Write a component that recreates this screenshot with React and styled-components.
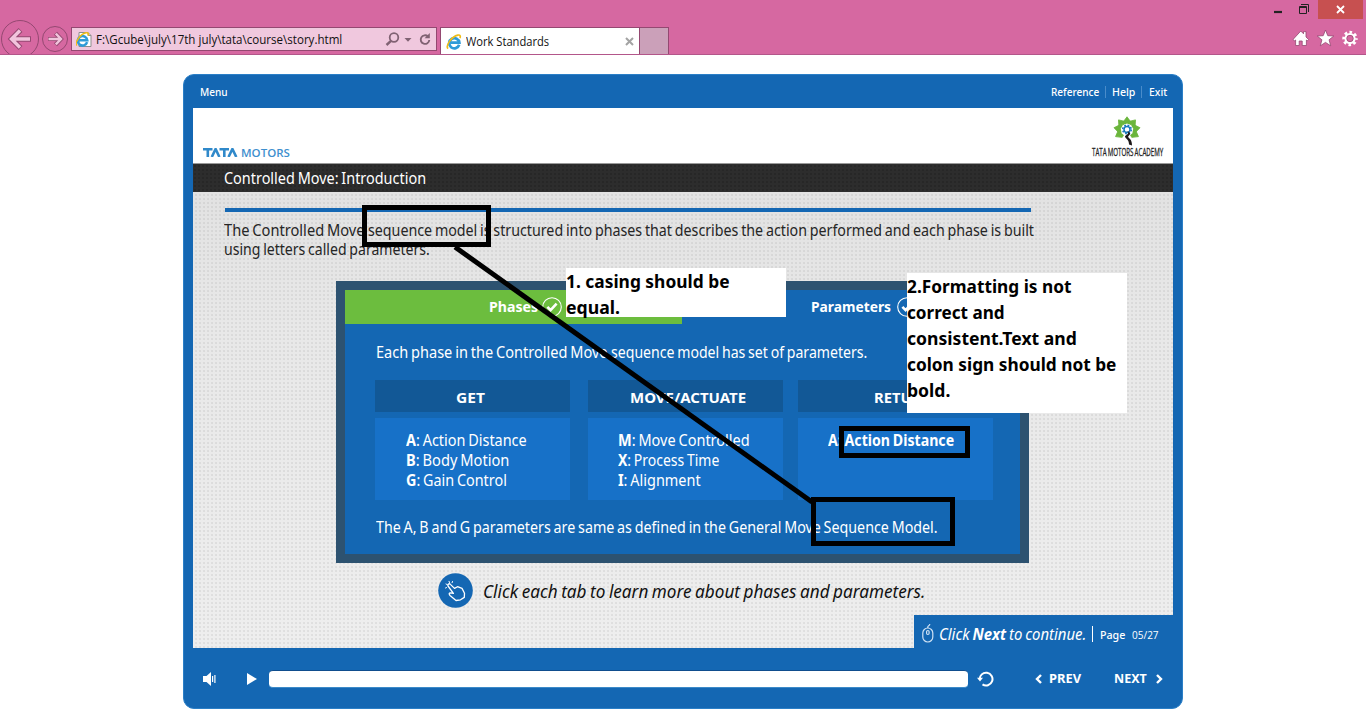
import React, { useLayoutEffect, useRef, useState } from 'react';
import styled, { createGlobalStyle } from 'styled-components';

const Global = createGlobalStyle`
  * { box-sizing: border-box; }
  html, body { margin: 0; padding: 0; background: #fff; overflow: hidden; }
  body { font-family: 'Noto Sans', 'Open Sans', sans-serif; }
`;

/* Single line of text condensed to a fixed measure */
const Measure = styled.span`
  display: block;
  flex: none;
  width: ${(p) => p.$w}px;
  white-space: pre;
  text-align: left;
`;
const Glyphs = styled.span`
  display: inline-block;
  transform-origin: 0 50%;
`;
function Fit({ w, children, className }) {
  const ref = useRef(null);
  const [scale, setScale] = useState(1);
  useLayoutEffect(() => {
    if (ref.current) setScale(w / ref.current.offsetWidth);
  }, [w, children]);
  return (
    <Measure $w={w} className={className}>
      <Glyphs ref={ref} style={{ transform: `scaleX(${scale})` }}>{children}</Glyphs>
    </Measure>
  );
}

const Screen = styled.div`
  position: relative;
  width: 1366px;
  height: 728px;
  background: #fff;
  overflow: hidden;
`;

/* ---------- browser chrome ---------- */
const Chrome = styled.header`
  display: flex;
  align-items: flex-start;
  height: 55px;
  background: #d668a1;
  border-bottom: 1px solid #b3568a;
  overflow: hidden;
`;
const NavArrows = styled.svg`
  flex: none;
  width: 71px;
  height: 54px;
`;
const Address = styled.div`
  display: flex;
  align-items: center;
  width: 366px;
  height: 24px;
  margin-top: 27px;
  padding: 0 4px;
  border: 1px solid #944871;
  background: #f0c8de;
  font: 12.5px/22px 'Open Sans', sans-serif;
  color: #111;
`;
const AddressText = styled(Fit)`
  margin: 1px 0 0 3px;
`;
const AddressTools = styled.svg`
  width: 50px;
  height: 20px;
  margin-left: auto;
`;
const Tab = styled.div`
  display: flex;
  align-items: center;
  width: 200px;
  height: 27px;
  margin: 27px 0 0 3px;
  padding: 1px 5px 0 5px;
  border: 1px solid #944871;
  border-bottom: 0;
  background: #fff;
  font: 12.5px/22px 'Open Sans', sans-serif;
  color: #111;
`;
const TabTitle = styled(Fit)`
  margin-left: 4px;
`;
const TabClose = styled.svg`
  width: 9px;
  height: 9px;
  margin-left: auto;
`;
const NewTab = styled.div`
  width: 29px;
  height: 27px;
  margin-top: 27px;
  border: 1px solid #944871;
  border-left: 0;
  border-bottom: 0;
  background: #cba0b9;
`;
const WindowArea = styled.div`
  display: flex;
  flex-direction: column;
  align-items: flex-end;
  margin-left: auto;
`;
const WindowButtons = styled.div`
  display: flex;
  height: 19px;
  padding-right: 3px;
`;
const WindowGlyphs = styled.svg`
  width: 50px;
  height: 19px;
`;
const CloseButton = styled.div`
  display: flex;
  align-items: center;
  justify-content: center;
  width: 45px;
  height: 19px;
  background: #c75050;
`;
const BrowserTools = styled.svg`
  width: 76px;
  height: 30px;
  margin-top: 4px;
`;

function IELogo({ size, page }) {
  return (
    <svg width={size} height={size} viewBox="0 0 17 17">
      {page && <path d="M3 1.5h9l3 3v11H3z" fill="#fff" stroke="#8d8d8d" />}
      {page && <path d="M12 1.5v3h3" fill="none" stroke="#8d8d8d" />}
      <path
        transform={page ? 'translate(-1.2 1.2) scale(.88)' : undefined}
        d="M14 11.400A5.400 5.400 0 1 1 14.200 9.200H5"
        fill="none"
        stroke="#2f9bd8"
        strokeWidth="2.900"
      />
      <path
        transform={page ? 'translate(-1 .8) scale(.88)' : undefined}
        d="M2.200 15.600C-1 12.600 6 2.600 12.500 1.200c3-.6 3 1.600 2.300 3.200"
        fill="none"
        stroke="#f0bc16"
        strokeWidth="1.700"
      />
    </svg>
  );
}

/* ---------- course player ---------- */
const Player = styled.main`
  display: flex;
  flex-direction: column;
  width: 1000px;
  height: 635px;
  margin: 19px 0 0 183px;
  padding: 0 9px;
  border: 1px solid #2b7fc7;
  border-radius: 11px;
  background: #1467b3;
  word-spacing: -1px;
`;
const MenuBar = styled.nav`
  display: flex;
  align-items: center;
  height: 33px;
  padding: 2px 6px 0 7px;
  font-size: 11.5px;
  font-weight: 500;
  line-height: 16px;
  color: #fff;
`;
const MenuRight = styled.div`
  display: flex;
  align-items: center;
  margin-left: auto;
`;
const Divider = styled.i`
  width: 1px;
  height: ${(p) => p.$h}px;
  margin: ${(p) => p.$m};
  background: ${(p) => p.$c};
`;
const Stage = styled.section`
  display: flex;
  flex-direction: column;
  width: 980px;
  height: 540px;
`;
const Banner = styled.div`
  display: flex;
  justify-content: space-between;
  align-items: flex-start;
  height: 56px;
  padding: 0 10px;
  background: #fff;
  border-bottom: 1px solid #999;
`;
const TataWord = styled.div`
  display: flex;
  align-items: center;
  gap: 3px;
  margin-top: 38px;
  font: 600 11.5px/14px 'Open Sans', sans-serif;
  color: #3e8fce;
  svg { flex: none; }
`;
const Academy = styled.div`
  display: flex;
  flex-direction: column;
  align-items: center;
  padding-top: 8px;
  font: 11.5px/13px 'Open Sans', sans-serif;
  color: #222;
`;
const AcademyName = styled(Fit)`
  margin-top: -1px;
  -webkit-text-stroke: 0.3px #222;
`;
const TitleBar = styled.div`
  display: flex;
  align-items: center;
  height: 28px;
  padding: 0 31px;
  background: radial-gradient(circle, rgba(34, 34, 34, 0.5) 0.8px, transparent 1.2px) 0 0 / 4px 4px, #2d2d2d;
  font-size: 15.5px;
  line-height: 20px;
  color: #fff;
`;
const Slide = styled.div`
  display: flex;
  flex-direction: column;
  height: 456px;
  padding-left: 31px;
  background:
    radial-gradient(circle, rgba(110, 110, 110, 0.11) 0.7px, transparent 1.2px) 1px 1px / 4px 4px,
    linear-gradient(#e2e2e2, #e8e8e8 30%, #eeeeee);
`;
const Rule = styled.div`
  flex: none;
  width: 806px;
  height: 4px;
  margin: 16px 0 9px 1px;
  background: #1467b3;
`;
const Intro = styled.div`
  font-size: 15.5px;
  line-height: 19px;
  color: #262626;
`;
const Line = styled.div`
  display: flex;
`;
const Panel = styled.div`
  display: flex;
  flex-direction: column;
  flex: none;
  width: 693px;
  height: 282px;
  margin: 22px 0 0 112px;
  border: 9px solid #2d5270;
  background: #1467b3;
  color: #fff;
  font-size: 15.5px;
  line-height: 20px;
`;
const Tabs = styled.div`
  display: flex;
  height: 34px;
`;
const PanelTab = styled.div`
  display: flex;
  align-items: center;
  gap: ${(p) => (p.$active ? 4 : 6)}px;
  width: 337px;
  padding-left: ${(p) => (p.$active ? 144 : 129)}px;
  background: ${(p) => (p.$active ? '#6cbd3e' : '#1467b3')};
  font-size: 15px;
  font-weight: 700;
`;
const TabLabel = styled(Fit)`
  margin-top: -2px;
`;
const Lead = styled.div`
  display: flex;
  margin: 18px 0 18px 31px;
`;
const Columns = styled.div`
  display: flex;
  padding-left: 30px;
`;
const Column = styled.div`
  width: 195px;
  margin-right: ${(p) => p.$gap}px;
`;
const ColumnHead = styled.div`
  display: flex;
  align-items: center;
  height: 32px;
  padding: 2px 0 0 ${(p) => p.$pad}px;
  margin-bottom: 6px;
  background: #125896;
  font-size: 15px;
  font-weight: 700;
`;
const ColumnBody = styled.div`
  height: 82px;
  padding: 12px 0 0 ${(p) => p.$pad}px;
  background: #1771c8;
  b { font-weight: 700; }
`;
const Closing = styled.div`
  margin: 17px 0 0 31px;
`;
const Hint = styled.div`
  display: flex;
  align-items: center;
  gap: 10px;
  margin: 10px 0 0 214px;
  font-size: 18px;
  font-style: italic;
  line-height: 24px;
  color: #111;
`;
const HintText = styled(Fit)`
  margin-top: 2px;
`;
const NextBar = styled.div`
  display: flex;
  align-items: center;
  align-self: flex-end;
  flex: none;
  width: 259px;
  height: 33px;
  margin-top: auto;
  padding: 6px 0 0 7px;
  background: #1467b3;
  color: #fff;
`;
const NextText = styled(Fit)`
  margin-left: 4px;
  font-size: 15.5px;
  line-height: 22px;
  font-style: italic;
`;
const PageLabel = styled(Fit)`
  margin-top: 1px;
  font-size: 11.5px;
  font-weight: 500;
  line-height: 16px;
`;
const PageCount = styled(Fit)`
  margin: 2px 0 0 7px;
  font: 11.5px/16px 'Open Sans', sans-serif;
`;
const Controls = styled.footer`
  display: flex;
  align-items: center;
  height: 61px;
  padding: 2px 8px 0 10px;
  color: #fff;
  font-size: 12.5px;
  font-weight: 700;
  line-height: 18px;
`;
const VolumeIcon = styled.svg`
  flex: none;
  margin-right: 31px;
`;
const Seek = styled.div`
  flex: none;
  width: 699px;
  height: 18px;
  margin: 0 9px 0 12px;
  border-radius: 4px;
  background: #fff;
  border-top: 1px solid #0f4d8d;
  border-bottom: 1px solid #3c8ac8;
`;
const StepButton = styled.div`
  display: flex;
  align-items: center;
  gap: ${(p) => p.$gap}px;
  margin-left: ${(p) => p.$ml}px;
`;

/* ---------- review marks lying over the page ---------- */
const Note = styled.div`
  position: absolute;
  left: ${(p) => p.$x}px;
  top: ${(p) => p.$y}px;
  width: 220px;
  height: ${(p) => p.$h}px;
  background: #fff;
  color: #000;
  font: 700 18px/26px 'Noto Sans', sans-serif;
`;
const Marks = styled.svg`
  position: absolute;
  left: 0;
  top: 0;
  width: 1366px;
  height: 728px;
`;

function Check() {
  return (
    <svg width="20" height="20" viewBox="0 0 20 20" fill="none" stroke="#fff">
      <circle cx="10" cy="10" r="9.3" strokeWidth="1.1" />
      <path d="M5.4 9.8l3.2 3.4 6-6.6" strokeWidth="2.6" />
    </svg>
  );
}

function AcademyLogo() {
  const leaves = [-120, -80, -40, 0, 40, 80, 120];
  return (
    <svg width="30" height="30" viewBox="0 0 30 30">
      {leaves.map((a) => (
        <path
          key={a}
          transform={`rotate(${a} 14 14)`}
          d="M14 .8L18 6.200L16.600 8.400L14 7.200L11.400 8.400L10 6.200z"
          fill="#6bb53c"
          stroke="#6bb53c"
          strokeWidth=".8"
        />
      ))}
      <circle cx="14" cy="13.500" r="5.800" fill="#fff" />
      <circle cx="14" cy="13.500" r="3" fill="none" stroke="#1879bd" strokeWidth="1.500" />
      <circle cx="14" cy="13.500" r="4.300" fill="none" stroke="#1879bd" strokeWidth="1.500" strokeDasharray="1.800 1.577" />
      <path d="M13 15c1.500 0 3 1 2 2.600-1.500 2-4.500 2.300-2 4.600 1.500 1.500 3 2.500 3 6.300l3 .9c0-5-2-6.300-3.500-7.800-1.200-1.400 2-2.400 1.500-4.300-.4-1.500-2-2.700-4-2.300z" fill="#1c1718" />
    </svg>
  );
}

export default function App() {
  return (
    <Screen>
      <Global />
      <Chrome>
        <NavArrows viewBox="0 0 71 54" fill="none">
          <circle cx="20" cy="39" r="18.500" stroke="#944871" />
          <circle cx="55" cy="39" r="12.500" stroke="#944871" />
          <path d="M31 39H11M20.500 30L11.500 39l9 9" stroke="#944871" strokeWidth="5.400" />
          <path d="M30 39H11.500M20 30.500L11.500 39l8.500 8.500" stroke="#f1c3dc" strokeWidth="3.400" />
          <path d="M48 39h13M55.500 33.200L61 39l-5.500 5.800" stroke="#944871" strokeWidth="4.200" />
          <path d="M48.500 39H61M55.800 33.700L61 39l-5.200 5.300" stroke="#f1c3dc" strokeWidth="2.400" />
        </NavArrows>
        <Address>
          <IELogo size={17} page />
          <AddressText w={246}>F:\Gcube\july\17th july\tata\course\story.html</AddressText>
          <AddressTools viewBox="0 0 50 20" fill="none" stroke="#806273">
            <circle cx="12" cy="8.500" r="4.300" strokeWidth="1.800" />
            <path d="M9 11.800L4.500 16" strokeWidth="2.400" />
            <path d="M22.500 9h7l-3.500 3.800z" fill="#806273" stroke="none" />
            <path d="M46 7.500A4.300 4.300 0 1 0 47.300 11" strokeWidth="1.900" />
            <path d="M47.800 4v5.200h-5.200z" fill="#806273" stroke="none" />
          </AddressTools>
        </Address>
        <Tab>
          <IELogo size={16} />
          <TabTitle w={83}>Work Standards</TabTitle>
          <TabClose viewBox="0 0 9 9"><path d="M1 1l7 7M8 1L1 8" stroke="#a3a3a3" strokeWidth="2" /></TabClose>
        </Tab>
        <NewTab />
        <WindowArea>
          <WindowButtons>
            <WindowGlyphs viewBox="0 0 50 19" fill="none" stroke="#222">
              <path d="M6 12h8" strokeWidth="2.200" />
              <path d="M31.500 6.500h7v7h-7zM31 7.500h8M33 4.500h7.500V12" />
            </WindowGlyphs>
            <CloseButton>
              <svg width="9" height="9" viewBox="0 0 9 9"><path d="M1 1l7 7M8 1L1 8" stroke="#fff" strokeWidth="1.800" /></svg>
            </CloseButton>
          </WindowButtons>
          <BrowserTools viewBox="0 0 76 30" fill="#fff" stroke="#944871" strokeWidth=".8">
            <path d="M3 16.500L10.800 8l2.700 2.800V8.600h2.500V14l2.600 2.500-1.300 1.300-.9-.8v5.500h-4.200v-4.500h-3v4.500H5.600V17l-1 .8z" />
            <path d="M35.500 7l2.300 5.700 6 .3-4.700 3.800 1.600 6-5.200-3.400-5.200 3.400 1.600-6-4.700-3.800 6-.3z" />
            <circle cx="60" cy="15.500" r="6.300" fill="none" stroke="#fff" strokeWidth="2.800" strokeDasharray="2.600 2.348" strokeDashoffset="1.300" />
            <circle cx="60" cy="15.500" r="4.500" fill="none" stroke="#fff" strokeWidth="2.200" />
            <circle cx="60" cy="15.500" r="3.200" fill="none" strokeWidth=".7" />
          </BrowserTools>
        </WindowArea>
      </Chrome>

      <Player>
        <MenuBar>
          <Fit w={28}>Menu</Fit>
          <MenuRight>
            <Fit w={48}>Reference</Fit>
            <Divider $h={12} $m="0 6px 0 6px" $c="#4a8cca" />
            <Fit w={23}>Help</Fit>
            <Divider $h={12} $m="0 7px 0 6px" $c="#4a8cca" />
            <Fit w={18}>Exit</Fit>
          </MenuRight>
        </MenuBar>
        <Stage>
          <Banner>
            <TataWord>
              <svg width="35" height="9" viewBox="0 0 35 9" fill="none" stroke="#3089ca" strokeWidth="2.600">
                <path d="M0 1.300h9.500M4.800 1v8M16.500 1.300H26M21.300 1v8" />
                <path d="M8.800 9l3.800-8 3.800 8M25.500 9l3.900-8 3.900 8" />
              </svg>
              <Fit w={49}>MOTORS</Fit>
            </TataWord>
            <Academy>
              <AcademyLogo />
              <AcademyName w={71}>TATA MOTORS ACADEMY</AcademyName>
            </Academy>
          </Banner>
          <TitleBar><Fit w={202}>Controlled Move: Introduction</Fit></TitleBar>
          <Slide>
            <Rule />
            <Intro>
              <Line>
                <Fit w={143.5}>{'The Controlled Move '}</Fit>
                <Fit w={666}>sequence model is structured into phases that describes the action performed and each phase is built</Fit>
              </Line>
              <Fit w={206}>using letters called parameters.</Fit>
            </Intro>
            <Panel>
              <Tabs>
                <PanelTab $active><TabLabel w={49}>Phases</TabLabel><Check /></PanelTab>
                <PanelTab><TabLabel w={80}>Parameters</TabLabel><Check /></PanelTab>
              </Tabs>
              <Lead>
                <Fit w={234.5}>{'Each phase in the Controlled Move '}</Fit>
                <Fit w={256.5}>sequence model has set of parameters.</Fit>
              </Lead>
              <Columns>
                <Column $gap={18}>
                  <ColumnHead $pad={81}><Fit w={29}>GET</Fit></ColumnHead>
                  <ColumnBody $pad={31}>
                    <Fit w={121}><b>A</b>: Action Distance</Fit>
                    <Fit w={103}><b>B</b>: Body Motion</Fit>
                    <Fit w={101}><b>G</b>: Gain Control</Fit>
                  </ColumnBody>
                </Column>
                <Column $gap={15}>
                  <ColumnHead $pad={42}><Fit w={116}>MOVE/ACTUATE</Fit></ColumnHead>
                  <ColumnBody $pad={30}>
                    <Fit w={132}><b>M</b>: Move Controlled</Fit>
                    <Fit w={101}><b>X</b>: Process Time</Fit>
                    <Fit w={83}><b>I</b>: Alignment</Fit>
                  </ColumnBody>
                </Column>
                <Column $gap={0}>
                  <ColumnHead $pad={76}><Fit w={59}>RETURN</Fit></ColumnHead>
                  <ColumnBody $pad={30}><Fit w={126}><b>A: Action Distance</b></Fit></ColumnBody>
                </Column>
              </Columns>
              <Closing><Fit w={562}>The A, B and G parameters are same as defined in the General Move Sequence Model.</Fit></Closing>
            </Panel>
            <Hint>
              <svg width="35" height="35" viewBox="0 0 35 35" fill="none" stroke="#fff" strokeLinecap="round" strokeLinejoin="round">
                <circle cx="17.500" cy="17.500" r="17.300" fill="#1467b3" stroke="none" />
                <path d="M18 27.500l-6-5c-1.200-1.300-1.200-2.600.6-2.600l2.800.4-5.400-7.300c-.9-1.500 1.200-3 2.400-1.600l4.100 4 3-1.700 4.500 1.700 2.500 4.800-.2 4.200-3.800 2.400z" strokeWidth="1.300" />
                <path d="M7.500 15l1-.4M8 11l1.200.6M11 8.300l.5 1.200M14.500 8.500l-.4 1.200" strokeWidth="1" />
              </svg>
              <HintText w={442}>Click each tab to learn more about phases and parameters.</HintText>
            </Hint>
            <NextBar>
              <svg width="14" height="20" viewBox="0 0 14 20" fill="none" stroke="#cfe2f4" strokeWidth="1.200">
                <rect x="1.800" y="4" width="10" height="14" rx="5" />
                <rect x="5.600" y="6.500" width="2.500" height="4" rx="1.200" />
                <path d="M6.800 4V3c0-1.500 2-1 2-3" />
              </svg>
              <NextText w={147}>Click <b>Next</b> to continue.</NextText>
              <Divider $h={16} $m="0 7px 0 6px" $c="#fff" />
              <PageLabel w={25}>Page</PageLabel>
              <PageCount w={27}>05/27</PageCount>
            </NextBar>
          </Slide>
        </Stage>
        <Controls>
          <VolumeIcon width="13" height="14" viewBox="0 0 13 14" fill="#fff">
            <path d="M0 4h3.500L8 0v14L3.500 10H0zM9 4h1.200v6H9zM11.300 3h1.200v8h-1.200z" />
          </VolumeIcon>
          <svg width="10" height="12" viewBox="0 0 10 12" fill="#fff"><path d="M0 0l10 6-10 6z" /></svg>
          <Seek />
          <svg width="17" height="16" viewBox="0 0 17 16" fill="none" stroke="#fff" strokeWidth="2">
            <path d="M2.700 8.500A6.400 6.400 0 1 1 5.500 13.400" />
            <path d="M0 6.700h6L3 10.500z" fill="#fff" stroke="none" />
          </svg>
          <StepButton $ml={41} $gap={7}>
            <svg width="7" height="10" viewBox="0 0 7 10" fill="none" stroke="#fff" strokeWidth="2.400"><path d="M6 1L2 5l4 4" /></svg>
            <Fit w={32}>PREV</Fit>
          </StepButton>
          <StepButton $ml={33} $gap={9}>
            <Fit w={33}>NEXT</Fit>
            <svg width="7" height="10" viewBox="0 0 7 10" fill="none" stroke="#fff" strokeWidth="2.400"><path d="M1 1l4 4-4 4" /></svg>
          </StepButton>
        </Controls>
      </Player>

      <Note $x={566} $y={268} $h={49}>
        <Fit w={164}>1. casing should be</Fit>
        <Fit w={54}>equal.</Fit>
      </Note>
      <Note $x={907} $y={273} $h={140}>
        <Fit w={165}>2.Formatting is not</Fit>
        <Fit w={98}>correct and</Fit>
        <Fit w={170}>consistent.Text and</Fit>
        <Fit w={209}>colon sign should not be</Fit>
        <Fit w={43}>bold.</Fit>
      </Note>
      <Marks viewBox="0 0 1366 728" fill="none" stroke="#000" strokeWidth="5">
        <rect x="364.500" y="207.500" width="124" height="37" />
        <rect x="841.500" y="428.500" width="126" height="27" />
        <rect x="813.500" y="499.500" width="139" height="44" />
        <path d="M455 247L812 502" />
      </Marks>
    </Screen>
  );
}
